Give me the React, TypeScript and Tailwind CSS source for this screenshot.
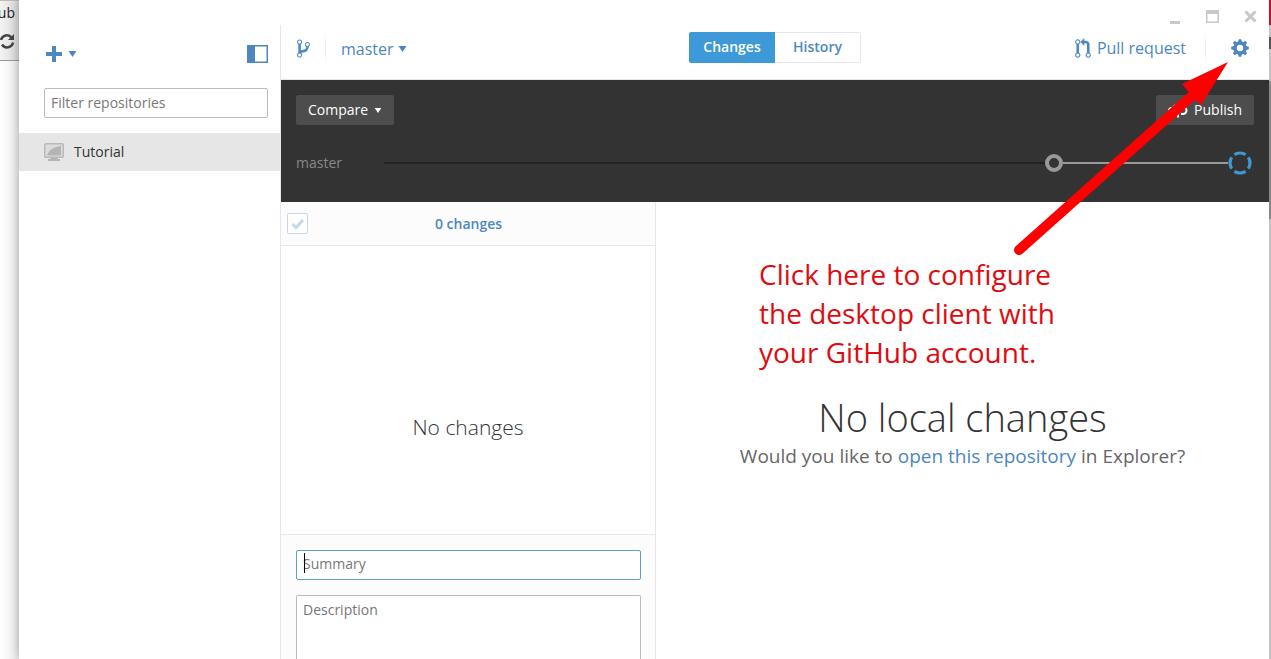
import type { ReactNode } from "react";

function Caret({ className }: { className?: string }) {
  return (
    <svg viewBox="0 0 8 6" className={className} fill="currentColor" aria-hidden="true">
      <path d="M0 0h8L4 6z" />
    </svg>
  );
}

function BranchIcon() {
  return (
    <svg viewBox="0 0 10 16" className="h-[21px] w-[13px]" fill="currentColor" aria-hidden="true">
      <path d="M10 5c0-1.11-.89-2-2-2a1.993 1.993 0 0 0-1 3.72v.3c-.02.52-.23.98-.63 1.38-.4.4-.86.61-1.38.63-.83.02-1.48.16-2 .45V4.72a1.993 1.993 0 0 0-1-3.72C.88 1 0 1.89 0 3a2 2 0 0 0 1 1.72v6.56c-.59.35-1 .99-1 1.72 0 1.11.89 2 2 2 1.11 0 2-.89 2-2 0-.53-.2-1-.53-1.36.09-.06.48-.41.59-.47.25-.11.56-.17.94-.17 1.05-.05 1.95-.45 2.75-1.25S8.95 7.77 9 6.73h-.02C9.59 6.37 10 5.73 10 5zM2 1.8c.66 0 1.2.55 1.2 1.2 0 .65-.55 1.2-1.2 1.2C1.35 4.2.8 3.65.8 3c0-.65.55-1.2 1.2-1.2zm0 12.41c-.66 0-1.2-.55-1.2-1.2 0-.65.55-1.2 1.2-1.2.65 0 1.2.55 1.2 1.2 0 .65-.55 1.2-1.2 1.2zm6-8c-.66 0-1.2-.55-1.2-1.2 0-.65.55-1.2 1.2-1.2.65 0 1.2.55 1.2 1.2 0 .65-.55 1.2-1.2 1.2z" />
    </svg>
  );
}

function PullRequestIcon() {
  return (
    <svg viewBox="0 0 12 16" className="h-[21px] w-4" fill="currentColor" aria-hidden="true">
      <path d="M11 11.28V5c-.03-.78-.34-1.47-.94-2.06C9.46 2.35 8.78 2.03 8 2H7V0L4 3l3 3V4h1c.27.02.48.11.69.31.21.2.3.42.31.69v6.28A1.993 1.993 0 0 0 10 15a1.993 1.993 0 0 0 1-3.72zm-1 2.92c-.66 0-1.2-.55-1.2-1.2 0-.65.55-1.2 1.2-1.2.65 0 1.2.55 1.2 1.2 0 .65-.55 1.2-1.2 1.2zM4 3c0-1.11-.89-2-2-2a1.993 1.993 0 0 0-1 3.72v6.56A1.993 1.993 0 0 0 2 15a1.993 1.993 0 0 0 1-3.72V4.72c.59-.34 1-.98 1-1.72zm-.8 10c0 .66-.55 1.2-1.2 1.2-.65 0-1.2-.55-1.2-1.2 0-.65.55-1.2 1.2-1.2.65 0 1.2.55 1.2 1.2zM2 4.2C1.34 4.2.8 3.65.8 3c0-.65.55-1.2 1.2-1.2.65 0 1.2.55 1.2 1.2 0 .65-.55 1.2-1.2 1.2z" />
    </svg>
  );
}

function GearIcon() {
  return (
    <svg viewBox="0 0 18 18" className="size-[18px]" aria-hidden="true">
      <circle cx="9" cy="9" r="5" fill="none" stroke="currentColor" strokeWidth="3.6" />
      {[0, 45, 90, 135, 180, 225, 270, 315].map((angle) => (
        <path
          key={angle}
          d="M7.1 3 7.7.2h2.6l.6 2.8z"
          fill="currentColor"
          transform={`rotate(${angle} 9 9)`}
        />
      ))}
    </svg>
  );
}

function MonitorIcon() {
  return (
    <svg viewBox="0 0 20 18" className="h-[18px] w-5" aria-hidden="true">
      <rect x=".75" y=".75" width="18.5" height="13.5" rx="1" fill="#dcdcdc" stroke="#b9b9b9" strokeWidth="1.5" />
      <path d="M3 12.500C5 7 9 4 17 3v9.500z" fill="#b4b4b4" />
      <path d="M7 15h6l1 1h2v2H4v-2h2z" fill="#b4b4b4" />
    </svg>
  );
}

function PublishIcon() {
  return (
    <svg viewBox="0 0 20 16" className="h-4 w-5" fill="none" stroke="currentColor" strokeWidth="2" aria-hidden="true">
      <path d="M5 12H4a3 3 0 0 1 0-6h1a5 5 0 0 1 9-1h1a3.500 3.500 0 0 1 0 7h-2" />
      <path d="M10 15.500V8M7 10.500 10 7.500l3 3" />
    </svg>
  );
}

function Divider() {
  return <div className="h-8 w-px bg-linear-to-b from-white via-gray-200 to-white" />;
}

function DarkButton({ children }: { children: ReactNode }) {
  return (
    <button className="flex h-[30px] items-center gap-1.5 rounded-xs bg-[#4d4d4d] px-3 text-sm text-white">
      {children}
    </button>
  );
}

function BrowserEdge() {
  return (
    <div className="flex w-[19px] shrink-0 flex-col overflow-hidden bg-linear-to-r from-white to-[#ececec]">
      <div className="flex h-[61px] flex-col items-end border-t border-b border-t-[#c9b4b6] border-b-[#999] bg-linear-to-r from-[#f4f4f4] to-[#d8d8d8] pr-1">
        <span className="text-sm leading-6 text-[#222]">ub</span>
        <svg viewBox="0 0 16 16" className="mt-2 size-4 shrink-0" fill="none" stroke="#444" strokeWidth="2.500" aria-hidden="true">
          <path d="M2 7a6 6 0 0 1 10.500-2.500M14 9.500A6 6 0 0 1 3 11.500" />
          <path d="M15 1v6H9z" fill="#444" stroke="none" />
        </svg>
      </div>
    </div>
  );
}

function Sidebar() {
  return (
    <aside className="flex w-[262px] shrink-0 flex-col bg-white">
      <div className="h-[25px]" />
      <div className="flex-1 border-r border-gray-200">
        <div className="flex items-center justify-between pt-5 pr-3 pl-[25px] text-[#4c87c0]">
          <button className="flex items-center gap-1.5" aria-label="Add repository">
            <svg viewBox="0 0 18 18" className="size-[18px]" fill="currentColor" aria-hidden="true">
              <path d="M8 1h4v6h6v4h-6v6H8v-6H2V7h6z" />
            </svg>
            <Caret className="h-1.5 w-[9px]" />
          </button>
          <button aria-label="Toggle sidebar">
            <svg viewBox="0 0 21 18" className="h-[18px] w-[21px]" aria-hidden="true">
              <rect x=".75" y=".75" width="19.5" height="16.5" fill="white" stroke="currentColor" strokeWidth="1.5" />
              <path d="M0 0h8v18H0z" fill="currentColor" />
            </svg>
          </button>
        </div>
        <div className="pt-[25px] pr-3 pb-[15px] pl-[25px]">
          <input
            type="text"
            aria-label="Filter repositories"
            placeholder="Filter repositories"
            className="block h-[30px] w-full rounded-xs border border-[#bbb] px-1.5 pb-0.5 text-sm placeholder:text-[#777]"
          />
        </div>
        <a href="#tutorial" className="flex h-[38px] items-center gap-2.5 bg-[#e6e6e6] pl-[25px] text-sm text-[#333]">
          <MonitorIcon />
          Tutorial
        </a>
      </div>
    </aside>
  );
}

function WindowControls() {
  return (
    <div className="flex h-8 items-end justify-end gap-[25px] pr-3 pb-2 text-[#c8c8c8]">
      <button aria-label="Minimize">
        <svg viewBox="0 0 12 14" className="h-3.5 w-3" aria-hidden="true">
          <path d="M1 11h10v3H1z" fill="currentColor" />
        </svg>
      </button>
      <button aria-label="Maximize">
        <svg viewBox="0 0 13 14" className="h-3.5 w-[13px]" aria-hidden="true">
          <path d="M0 0h13v13H0zM1.500 4v7.500h10V4z" fill="currentColor" fillRule="evenodd" />
        </svg>
      </button>
      <button aria-label="Close">
        <svg viewBox="0 0 13 14" className="h-3.5 w-[13px]" stroke="currentColor" strokeWidth="3" aria-hidden="true">
          <path d="m1.500 1.500 10 10M11.500 1.500l-10 10" />
        </svg>
      </button>
    </div>
  );
}

function Header() {
  return (
    <header className="grid h-12 grid-cols-[1fr_auto_1fr] items-start border-b border-gray-200 text-[#4c87c0]">
      <div className="flex items-center gap-[15px] pl-4">
        <BranchIcon />
        <Divider />
        <button className="flex items-center gap-1 pt-0.5 text-base">
          master
          <Caret className="h-1.5 w-[9px]" />
        </button>
      </div>
      <div className="flex h-[31px] rounded-xs border border-gray-200 text-sm font-semibold">
        <button className="-my-px -ml-px w-[86px] rounded-l-xs bg-[#3d99d8] pb-0.5 text-white">Changes</button>
        <button className="w-[85px] pb-0.5">History</button>
      </div>
      <div className="flex items-center justify-end pr-5">
        <button className="mr-[19px] flex items-center gap-1.5 text-base">
          <PullRequestIcon />
          Pull request
        </button>
        <Divider />
        <button aria-label="Settings" className="ml-[25px]">
          <GearIcon />
        </button>
      </div>
    </header>
  );
}

function Timeline() {
  return (
    <section className="h-[122px] bg-[#333] px-[15px] pt-[15px]">
      <div className="flex justify-between">
        <DarkButton>
          Compare
          <Caret className="h-[5px] w-2" />
        </DarkButton>
        <DarkButton>
          <PublishIcon />
          Publish
        </DarkButton>
      </div>
      <div className="mt-[26px] flex items-center pr-0.5 text-sm text-[#888]">
        <span className="w-[88px]">master</span>
        <div className="h-0.5 flex-1 bg-[#222]" />
        <div className="size-[18px] rounded-full border-4 border-[#999]" />
        <div className="h-0.5 w-[165px] bg-[#999]" />
        <svg viewBox="0 0 24 24" className="size-6" aria-hidden="true">
          <circle
            cx="12"
            cy="12"
            r="10"
            fill="none"
            stroke="#3d99d8"
            strokeWidth="3.2"
            pathLength="80"
            strokeDasharray="15 5"
            strokeDashoffset="-12.500"
            transform="rotate(0 12 12)"
          />
        </svg>
      </div>
    </section>
  );
}

function ChangesPanel() {
  return (
    <section className="flex w-[375px] shrink-0 flex-col border-r border-gray-200">
      <div className="flex h-11 items-center border-b border-gray-200 bg-[#fcfcfc] px-1.5">
        <label className="relative flex">
          <input
            type="checkbox"
            aria-label="Select all changes"
            defaultChecked
            className="size-[21px] appearance-none rounded-xs border border-[#c5d8e8] bg-white"
          />
          <svg
            viewBox="0 0 21 21"
            className="pointer-events-none absolute inset-0"
            fill="none"
            stroke="#c5d8e8"
            strokeWidth="3"
            aria-hidden="true"
          >
            <path d="m5.500 11 3.500 3.500 7-7.500" />
          </svg>
        </label>
        <h2 className="flex-1 pr-5 text-center text-sm font-semibold text-[#4c87c0]">0 changes</h2>
      </div>
      <div className="flex h-[288px] items-center justify-center pt-[76px] text-[21px] font-light text-[#333]">
        No changes
      </div>
      <form className="flex flex-1 flex-col gap-[15px] border-t border-gray-200 bg-[#fcfcfc] pt-[15px] pr-3.5 pl-[15px]">
        <div className="relative">
          <input
            type="text"
            aria-label="Summary"
            placeholder="Summary"
            className="block h-[30px] w-full rounded-xs border border-[#5f9fce] bg-white px-1.5 pb-1 text-sm outline-none placeholder:text-[#777]"
          />
          <span className="pointer-events-none absolute top-[3px] left-2 h-5 w-px bg-black" />
        </div>
        <textarea
          aria-label="Description"
          placeholder="Description"
          className="min-h-0 flex-1 resize-none rounded-t-xs border border-b-0 border-[#bbb] bg-white px-1.5 py-1 text-sm outline-none placeholder:text-[#777]"
        />
      </form>
    </section>
  );
}

function EmptyState() {
  return (
    <section className="flex-1 pt-[53px]">
      <p className="pl-[103px] text-[28px] leading-[39px] text-[#e00b10]">
        Click here to configure
        <br />
        the desktop client with
        <br />
        your GitHub account.
      </p>
      <div className="pt-5 text-center">
        <h1 className="text-[38px] leading-[50px] font-light text-[#333]">No local changes</h1>
        <p className="text-[19px] leading-7 text-[#666]">
          Would you like to{" "}
          <a href="#explorer" className="text-[#4c87c0]">
            open this repository
          </a>{" "}
          in Explorer?
        </p>
      </div>
    </section>
  );
}

export default function App() {
  return (
    <div className="relative flex h-screen overflow-hidden bg-white font-['Open_Sans',sans-serif]">
      <BrowserEdge />
      <div className="flex min-w-0 flex-1 shadow-[0_0_10px_#00000050]">
        <Sidebar />
        <main className="flex min-w-0 flex-1 flex-col bg-white">
          <WindowControls />
          <Header />
          <Timeline />
          <div className="flex min-h-0 flex-1">
            <ChangesPanel />
            <EmptyState />
          </div>
        </main>
      </div>
      <div className="flex w-0.5 shrink-0 flex-col bg-[#c4c4c4]">
        <div className="h-[25px] bg-[#c8102e]" />
        <div className="mt-3 h-3 bg-[#555]" />
        <div className="mt-8 h-[138px] bg-[#888]" />
      </div>
      {/* pointer from the note up to the settings gear */}
      <svg
        viewBox="0 0 220 200"
        className="pointer-events-none absolute top-[60px] right-[41px] h-[200px] w-[220px]"
        aria-hidden="true"
      >
        <path d="M9 190 183 35" stroke="#f00" strokeWidth="10" strokeLinecap="round" />
        <path d="m218 2-46 22 6 7 7 9 6 5z" fill="#f00" />
      </svg>
    </div>
  );
}
